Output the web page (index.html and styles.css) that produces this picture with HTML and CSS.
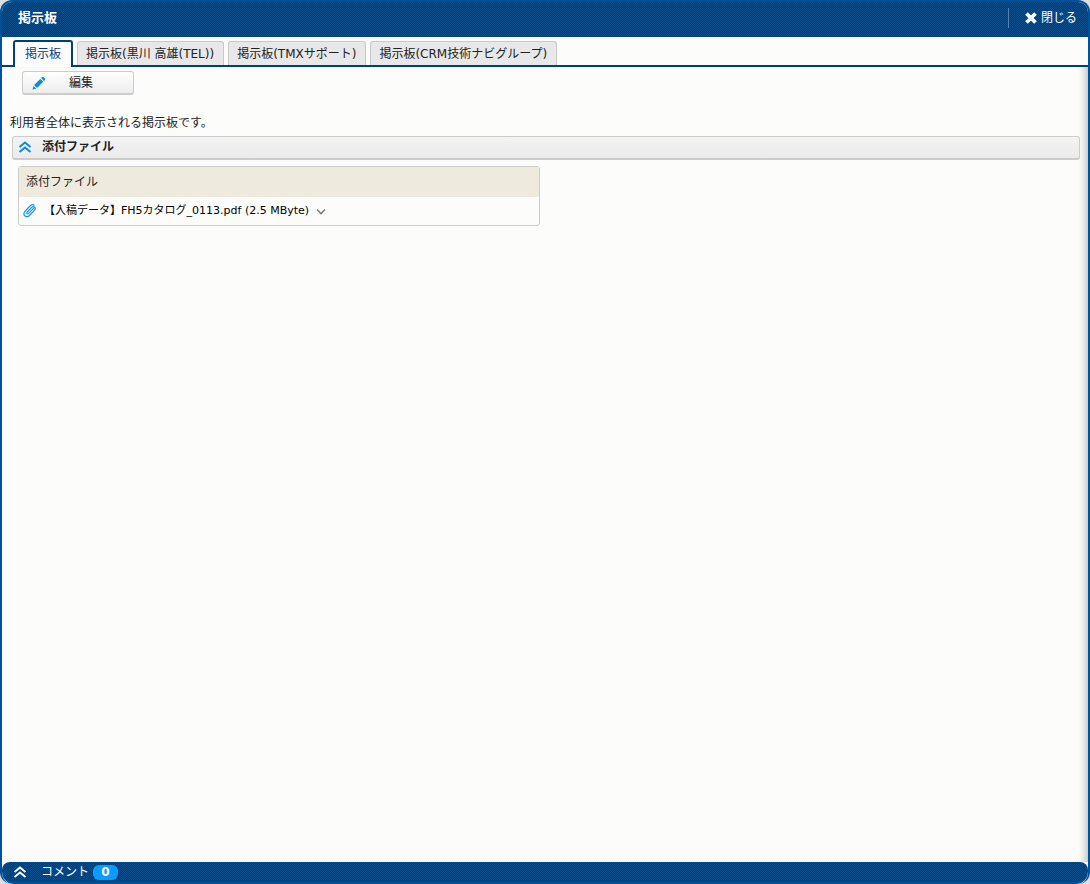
FILE: index.html
```html
<!DOCTYPE html>
<html lang="ja">
<head>
<meta charset="utf-8">
<title>掲示板</title>
<link rel="stylesheet" href="styles.css">
</head>
<body>
<div class="dialog">
  <header class="titlebar">
    <h1 class="title">掲示板</h1>
    <button class="close" type="button">
      <svg width="14" height="14" viewBox="0 0 14 14" aria-hidden="true"><path d="M2.500 2.500l9 9M11.500 2.500l-9 9" stroke="#fff" stroke-width="3.800"/></svg>
      <span>閉じる</span>
    </button>
  </header>
  <nav class="tabs">
    <button class="tab active" type="button">掲示板</button>
    <button class="tab" type="button">掲示板(黒川 高雄(TEL))</button>
    <button class="tab" type="button">掲示板(TMXサポート)</button>
    <button class="tab" type="button">掲示板(CRM技術ナビグループ)</button>
  </nav>
  <main class="content">
    <button class="edit" type="button">
      <svg width="16" height="14" viewBox="-1 0 16 14" aria-hidden="true"><path d="M10 1.200Q10.800.5 11.600 1.200L13 2.600Q13.500 3.300 12.900 4L12 4.900 9.100 2.100zM8.300 2.900l2.900 2.900L5 12 2.100 9.100zM1.500 10l2.700 2.700L.5 13.500z" fill="#0a8be0"/></svg>
      <span class="edit-label">編集</span>
    </button>
    <p class="message">利用者全体に表示される掲示板です。</p>
    <button class="section" type="button">
      <svg width="14" height="12" viewBox="0 0 14 12" aria-hidden="true"><path d="M1.500 6L7 1.500 12.500 6M1.500 11L7 6.500l5.500 4.500" fill="none" stroke="#0a8be0" stroke-width="2"/></svg>
      <span>添付ファイル</span>
    </button>
    <table class="files">
      <thead><tr><th>添付ファイル</th></tr></thead>
      <tbody><tr><td>
        <div class="file">
          <svg width="14" height="14" viewBox="0 0 14 14" aria-hidden="true"><path d="M10.500 4.300L5.600 9.400Q4.600 10.200 4 9.600T4.200 8L8.700 3.400Q10.300 2 11.600 3.200T11.500 6.200L6.200 11.700Q4 13.600 2 12T1.700 7.500L7 2Q9.300-.1 11.200 1.200" fill="none" stroke="#1694e0" stroke-width="1.200" stroke-linecap="round"/></svg>
          <a class="file-link" href="#">【入稿データ】FH5カタログ_0113.pdf (2.5 MByte)</a>
          <svg width="10" height="7" viewBox="0 0 10 7" aria-hidden="true"><path d="M1 1.500l4 4 4-4" fill="none" stroke="#808080" stroke-width="1.600"/></svg>
        </div>
      </td></tr></tbody>
    </table>
  </main>
  <footer class="commentbar">
    <button class="comments" type="button">
      <svg width="14" height="12" viewBox="0 0 14 12" aria-hidden="true"><path d="M1.500 6L7 1.500 12.500 6M1.500 11L7 6.500l5.500 4.500" fill="none" stroke="#fff" stroke-width="2"/></svg>
      <span>コメント</span>
      <span class="count">0</span>
    </button>
  </footer>
</div>
</body>
</html>
```

FILE: styles.css
```css
* {
  box-sizing: border-box;
}

body {
  margin: 0;
  background: #dcdfe1;
  color: #222;
  font: 12px/16px "DejaVu Sans", "Noto Sans CJK JP", sans-serif;
}

button {
  margin: 0;
  padding: 0;
  border: 0;
  background: none;
  color: inherit;
  font: inherit;
  cursor: pointer;
}

svg {
  display: block;
  flex: none;
}

.dialog {
  display: flex;
  flex-direction: column;
  min-height: 100vh;
  border: 2px solid #00529b;
  border-bottom: 0;
  border-radius: 12px;
  overflow: hidden;
  background: #fcfcfa;
}

.titlebar,
.commentbar {
  background: repeating-conic-gradient(#003d79 0 25%, #0b4c88 0 50%) 0 0 / 2px 2px;
  color: #fff;
}

.titlebar {
  display: flex;
  align-items: center;
  justify-content: space-between;
  height: 35px;
  padding: 0 11px 3px 16px;
}

.title {
  margin: 0;
  font-size: 13px;
  line-height: 16px;
}

.close {
  display: flex;
  align-items: center;
  gap: 3px;
  height: 20px;
  padding-left: 15px;
  border-left: 1px solid #4f84b5;
}

.tabs {
  display: flex;
  align-items: flex-end;
  gap: 4px;
  height: 30px;
  padding-left: 11px;
  border-bottom: 2px solid #003f7d;
}

.tab {
  height: 24px;
  padding: 0 9px 0 8px;
  border: 1px solid #c8c8c8;
  border-bottom: 0;
  border-radius: 3px 3px 0 0;
  background: #e8e8e8;
  white-space: nowrap;
}

.tab.active {
  height: 27px;
  margin-bottom: -2px;
  padding: 0 10px 2px;
  border: 2px solid #003f7d;
  border-bottom: 0;
  background: #fcfcfa;
  color: #003f7d;
}

.content {
  flex: 1;
  padding: 4px 8px 16px;
  box-shadow: inset -8px 0 8px -6px #b5b5b5;
}

.edit {
  display: flex;
  align-items: center;
  width: 112px;
  height: 24px;
  margin-left: 12px;
  padding: 0 8px;
  border: 1px solid #ccc;
  border-bottom-width: 2px;
  border-radius: 3px;
  background: linear-gradient(#fff, #ededed);
}

.edit-label {
  flex: 1;
  padding-right: 10px;
}

.message {
  margin: 20px 0 5px;
}

.section {
  display: flex;
  align-items: center;
  gap: 10px;
  width: calc(100% - 2px);
  height: 24px;
  margin-left: 2px;
  padding: 0 5px 1px;
  border: 1px solid #ccc;
  border-bottom-width: 2px;
  border-radius: 3px;
  background: linear-gradient(#f3f3f3, #ebebeb);
  font-weight: bold;
}

.files {
  width: 522px;
  max-width: 100%;
  margin: 6px 8px 0;
  border: 1px solid #ccc;
  border-radius: 3px;
  border-spacing: 0;
}

.files th {
  height: 30px;
  padding: 0 7px;
  background: #eeeadd;
  font-weight: normal;
  text-align: left;
}

.files td {
  height: 28px;
  padding: 0 4px;
}

.file {
  display: flex;
  align-items: center;
  gap: 7px;
  font-size: 11px;
}

.file-link {
  color: #000;
  text-decoration: none;
}

.commentbar {
  height: 22px;
  border-bottom: 2px solid #00529b;
  border-radius: 8px 8px 12px 12px;
}

.comments {
  display: flex;
  align-items: center;
  height: 20px;
  padding-left: 11px;
}

.comments svg {
  margin-right: 14px;
}

.count {
  min-width: 25px;
  height: 15px;
  margin-left: 4px;
  border-radius: 6px;
  background: #0a9cff;
  font-weight: bold;
  line-height: 15px;
}
```
